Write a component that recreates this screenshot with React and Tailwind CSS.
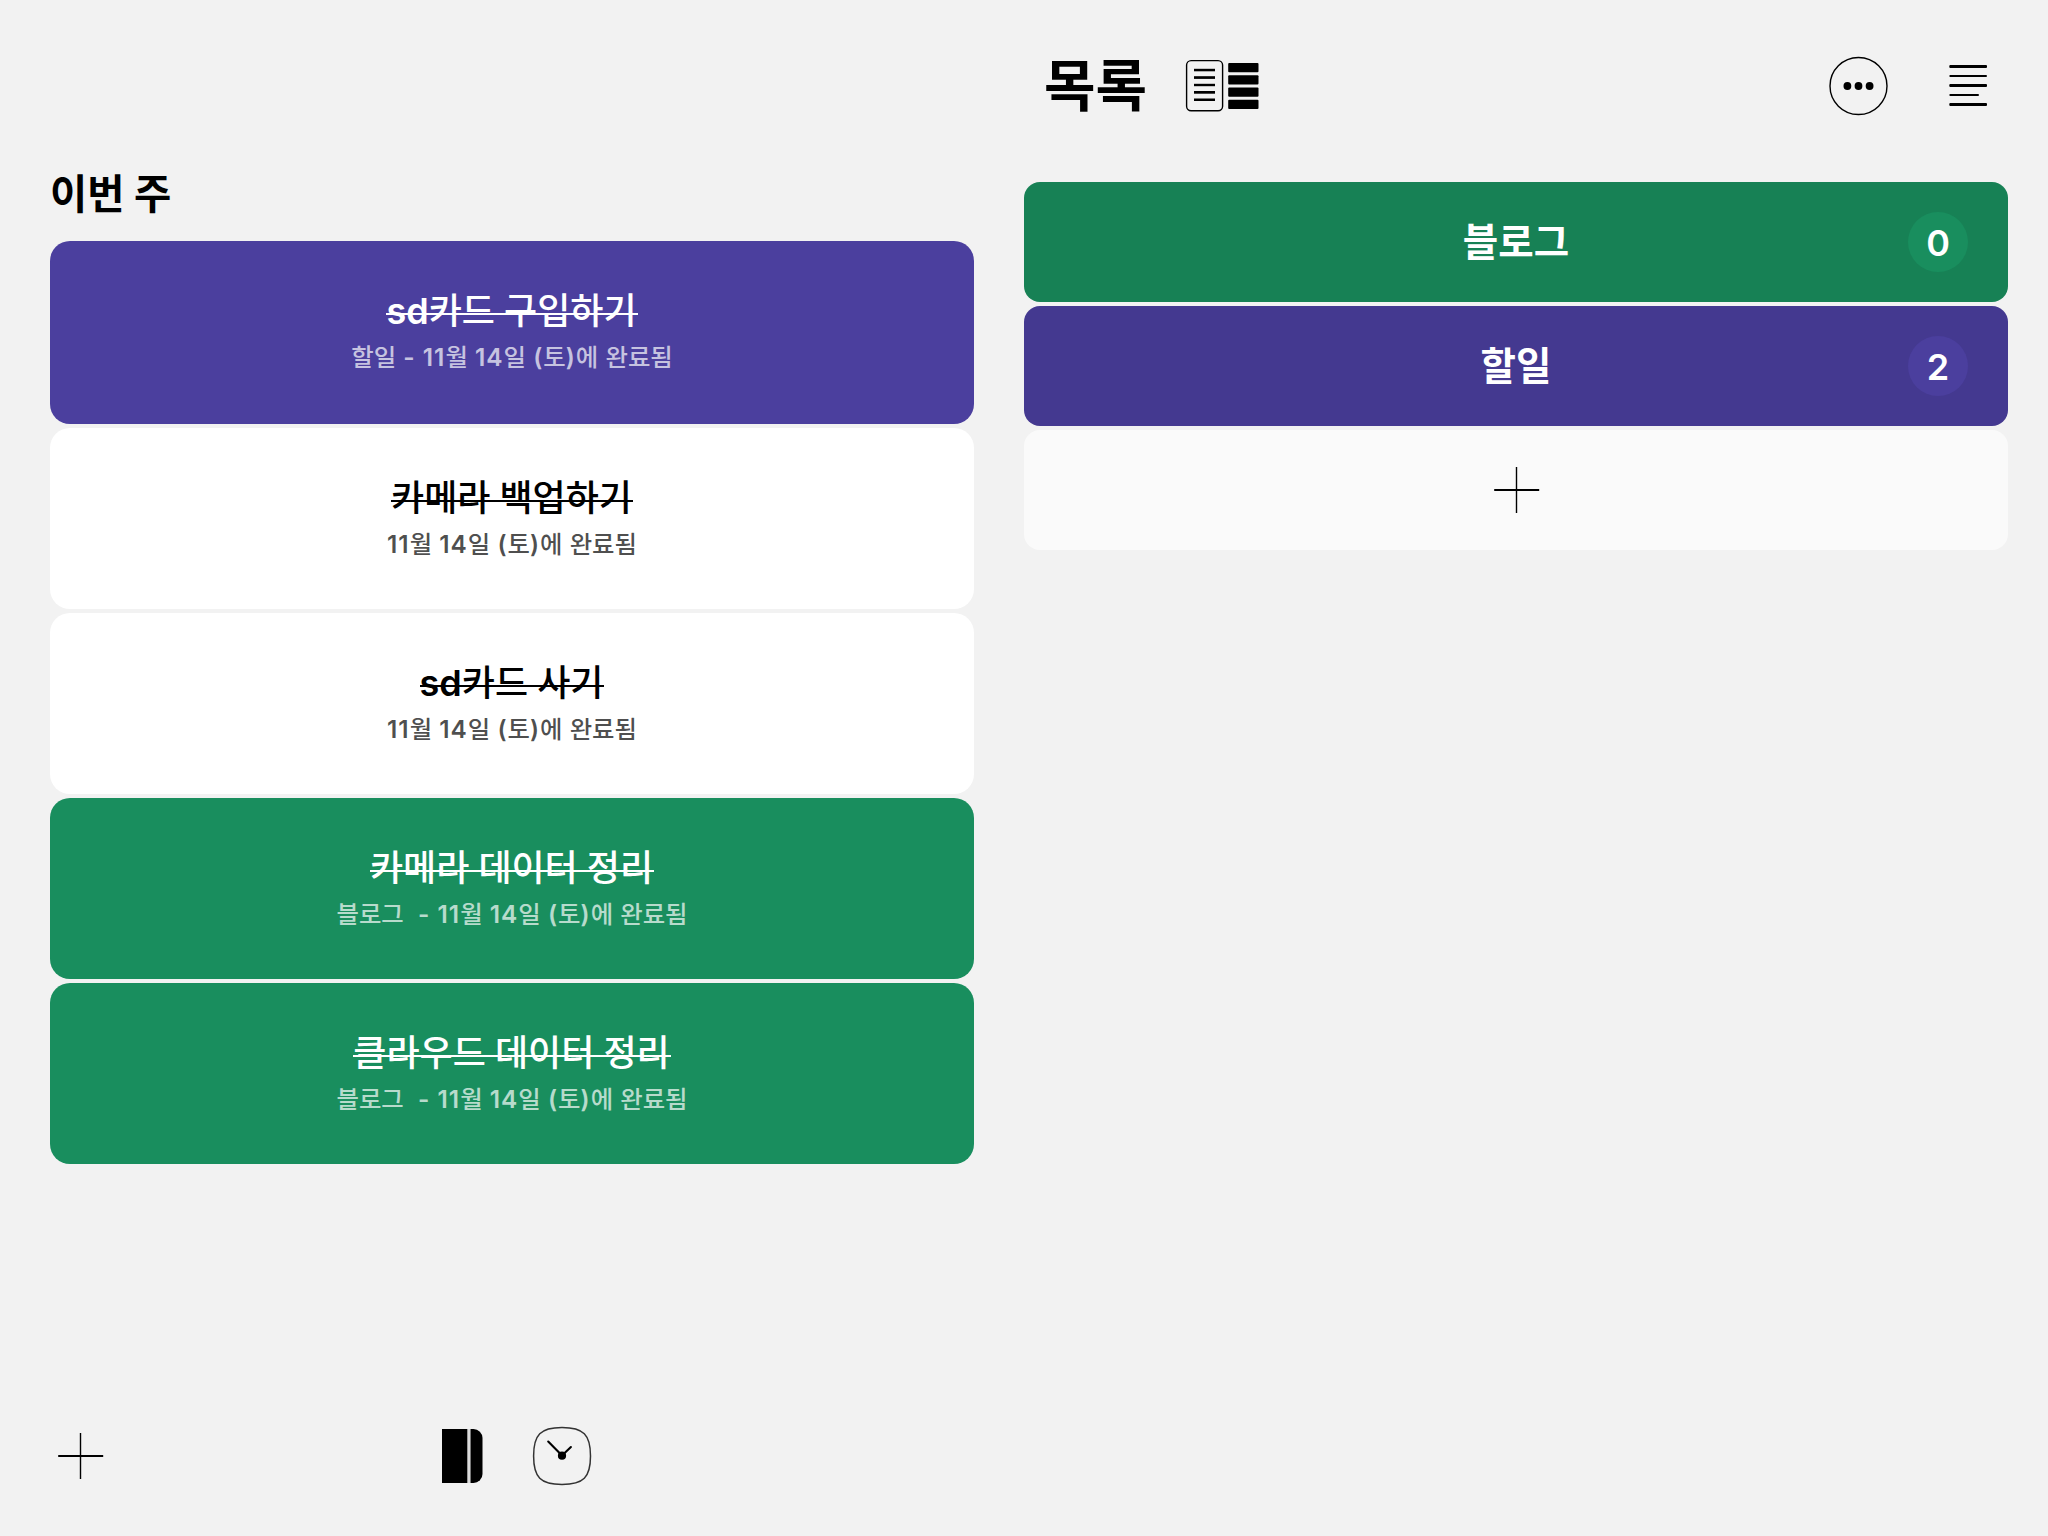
import React from 'react';

const tasks = [
  { title: 'sd카드 구입하기', note: '할일 - 11월 14일 (토)에 완료됨', card: 'h-[183px] pt-[43px] bg-[#4b3f9e] text-white', noteColor: 'text-white/70' },
  { title: '카메라 백업하기', note: '11월 14일 (토)에 완료됨', card: 'h-[181px] pt-[43px] bg-white text-black', noteColor: 'text-black/70' },
  { title: 'sd카드 사기', note: '11월 14일 (토)에 완료됨', card: 'h-[181px] pt-[43px] bg-white text-black', noteColor: 'text-black/70' },
  { title: '카메라 데이터 정리', note: '블로그  - 11월 14일 (토)에 완료됨', card: 'h-[181px] pt-[43px] bg-[#198e5e] text-white', noteColor: 'text-white/70' },
  { title: '클라우드 데이터 정리', note: '블로그  - 11월 14일 (토)에 완료됨', card: 'h-[181px] pt-[43px] bg-[#198e5e] text-white', noteColor: 'text-white/70' },
];

const lists = [
  { name: '블로그', count: 0, bar: 'bg-[#178155]', badge: 'bg-[#198e5e]' },
  { name: '할일', count: 2, bar: 'bg-[#443990]', badge: 'bg-[#4b3f9e]' },
];

const PlusIcon = () => (
  <svg width="48" height="48" viewBox="0 0 48 48">
    <rect x="1.2" y="23" width="45" height="2" />
    <rect x="22.8" y="1" width="1.4" height="46" />
  </svg>
);

const LayoutIcon = () => (
  <svg width="74" height="54" viewBox="0 0 74 54">
    <rect x="1.6" y="1.6" width="36" height="50.2" rx="4.5" fill="none" stroke="#000" strokeWidth="1.4" />
    <rect x="9" y="9.8" width="21" height="2.5" />
    <rect x="9" y="17.2" width="21" height="2.7" />
    <rect x="9" y="24.8" width="21" height="2.4" />
    <rect x="9" y="32" width="21" height="2.7" />
    <rect x="9" y="39.5" width="21" height="2.5" />
    <rect x="43.2" y="4" width="30.3" height="9.2" rx="1" />
    <rect x="43.2" y="16.2" width="30.3" height="9.2" rx="1" />
    <rect x="43.2" y="28.6" width="30.3" height="9.2" rx="1" />
    <rect x="43.2" y="40.8" width="30.3" height="9.2" rx="1" />
  </svg>
);

const MoreIcon = () => (
  <svg width="60" height="60" viewBox="0 0 60 60">
    <circle cx="30.5" cy="30" r="28.5" fill="none" stroke="#000" strokeWidth="1.4" />
    <circle cx="19.4" cy="30" r="3.9" />
    <circle cx="30.5" cy="30" r="3.9" />
    <circle cx="41.6" cy="30" r="3.9" />
  </svg>
);

const LinesIcon = () => (
  <svg width="40" height="42" viewBox="0 0 40 42">
    <rect x="1.3" y="0" width="37.7" height="3" rx="1" />
    <rect x="1.3" y="10" width="37.7" height="2" rx="1" />
    <rect x="1.3" y="19" width="37.7" height="3" rx="1" />
    <rect x="1.3" y="29" width="29.7" height="2" rx="1" />
    <rect x="1.3" y="38" width="37.7" height="3" rx="1" />
  </svg>
);

const BookIcon = () => (
  <svg width="41" height="54" viewBox="0 0 41 54">
    <rect width="25" height="54" />
    <rect x="25" width="1" height="54" fill="#999" />
    <rect x="26" width="2" height="54" fill="#dcdcdc" />
    <path d="M28.5 0h3a9 9 0 0 1 9 9v36a9 9 0 0 1-9 9h-3z" />
  </svg>
);

const ClockIcon = () => (
  <svg width="60" height="60" viewBox="0 0 60 60">
    <path d="M30 1.5C51.5 1.5 58.5 8.6 58.5 30S51.5 58.4 30 58.4 1.6 51.3 1.6 30 8.5 1.5 30 1.5z" fill="none" stroke="#333" strokeWidth="1.5" />
    <path d="M16.2 15.5L30 29.6M38.9 21L30 29.6" fill="none" stroke="#000" strokeWidth="2.1" strokeLinecap="round" />
    <circle cx="30" cy="29.7" r="4.1" />
  </svg>
);

// Latin letters and digits are set heavier than the Hangul around them
const MixedText = ({ text, latinClass }) =>
  text.split(/([\x20-\x7e]+)/).map((part, index) =>
    index % 2 === 1 ? <span key={index} className={latinClass}>{part}</span> : part
  );

const TaskCard = ({ task }) => (
  <div className={`flex flex-col items-center rounded-[20px] ${task.card}`}>
    <div className="relative pr-px text-[36px] leading-[54px] font-medium whitespace-pre">
      <MixedText text={task.title} latinClass="font-semibold" />
      <span className="absolute left-0 top-[29px] w-full h-[2px] bg-current" />
    </div>
    <div className={`text-[24.4px] leading-[36px] mt-px font-medium whitespace-pre ${task.noteColor}`}>
      <MixedText text={task.note} latinClass="font-semibold tracking-[1px]" />
    </div>
  </div>
);

const App = () => {
  return (
    <div className="flex w-[2048px] h-[1536px] overflow-hidden bg-[#f2f2f2] text-black font-['Inter','Noto_Sans_CJK_KR',sans-serif]">
      {/* This week */}
      <section className="flex flex-col w-[1024px] pl-[50px] pr-[50px]">
        <h2 className="pt-[165px] h-[241px] text-[40.5px] leading-[60px] font-bold">이번 주</h2>
        <div className="flex flex-col gap-1">
          {tasks.map((task, index) => (
            <TaskCard key={index} task={task} />
          ))}
        </div>
        <div className="flex items-center mt-[262px] h-[60px]">
          <button type="button" className="ml-[7px]"><PlusIcon /></button>
          <button type="button" className="ml-[337px]"><BookIcon /></button>
          <button type="button" className="ml-[49px]"><ClockIcon /></button>
        </div>
      </section>

      {/* Lists */}
      <section className="flex flex-col w-[984px]">
        <header className="flex items-center h-[182px] pb-[10px] pl-[20px] pr-[20px]">
          <h1 className="w-[141px] text-[56px] leading-[80px] font-bold">목록</h1>
          <LayoutIcon />
          <button type="button" className="ml-auto"><MoreIcon /></button>
          <button type="button" className="ml-[60px]"><LinesIcon /></button>
        </header>
        <div className="flex flex-col gap-1">
          {lists.map((list) => (
            <div key={list.name} className={`grid grid-cols-[100px_1fr_100px] items-center h-[120px] rounded-[16px] text-white ${list.bar}`}>
              <span className="col-start-2 text-center text-[38.5px] leading-[60px] font-bold">{list.name}</span>
              <span className={`flex items-center justify-center size-[60px] pt-px rounded-full text-[36px] font-semibold ${list.badge}`}>{list.count}</span>
            </div>
          ))}
          <button type="button" className="flex items-center justify-center h-[120px] pl-[2px] rounded-[16px] bg-[#fafafa]">
            <PlusIcon />
          </button>
        </div>
      </section>
    </div>
  );
};

export default App;
